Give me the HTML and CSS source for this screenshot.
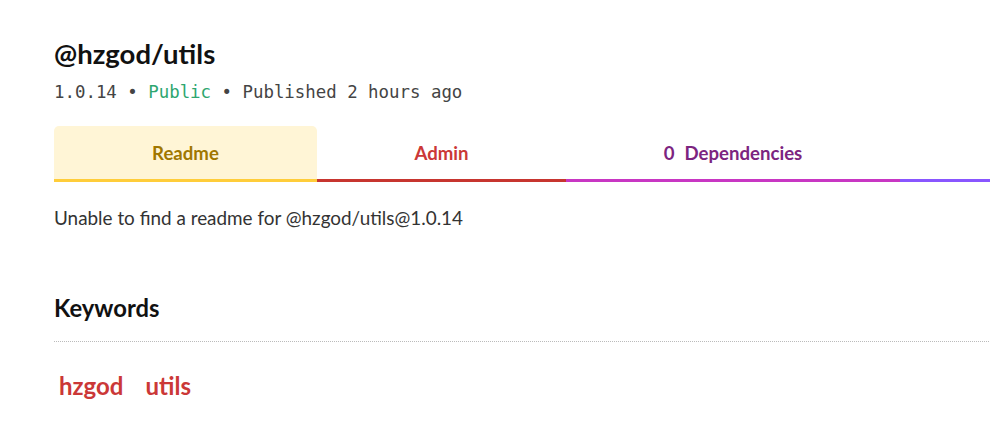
FILE: index.html
```html
<!DOCTYPE html>
<html>
<head>
<meta charset="utf-8">
<link rel="stylesheet" href="styles.css">
</head>
<body>
<main class="page">
  <header class="pkg-head">
    <h1 class="pkg-title">@hzgod/utils</h1>
    <div class="pkg-meta">1.0.14 • <span class="public">Public</span> • Published 2 hours ago</div>
  </header>
  <nav class="tabs">
    <div class="tab tab-readme">Readme</div>
    <div class="tab tab-admin">Admin</div>
    <div class="tab tab-deps"><span class="count">0</span>Dependencies</div>
    <div class="tab tab-versions"></div>
  </nav>
  <p class="readme-msg">Unable to find a readme for @hzgod/utils@1.0.14</p>
  <section class="keywords">
    <h2 class="kw-title">Keywords</h2>
    <div class="kw-list">
      <span class="kw">hzgod</span>
      <span class="kw">utils</span>
    </div>
  </section>
</main>
</body>
</html>
```

FILE: styles.css
```css
html, body {
  margin: 0;
  padding: 0;
  background: #fff;
  overflow: hidden;
}
body {
  font-family: Lato, "Noto Sans", sans-serif;
  color: rgba(0,0,0,0.8);
}
.page {
  margin-left: 54px;
  width: 936px;
  padding-top: 34px;
}
.pkg-title {
  margin: 0;
  font-size: 27.5px;
  font-weight: 700;
  color: #111;
  line-height: 40px;
}
.pkg-meta {
  margin-top: 3px;
  font-family: "DejaVu Sans Mono", "Liberation Mono", monospace;
  font-size: 17.4px;
  color: #444;
  line-height: 30px;
  letter-spacing: 0;
}
.public { color: #2ea66f; }
.tabs {
  display: flex;
  margin-top: 19px;
}
.tab {
  height: 53px;
  display: flex;
  align-items: center;
  justify-content: center;
  font-size: 18.6px;
  font-weight: 700;
  border-bottom: 3px solid;
  border-radius: 5px 5px 0 0;
  box-sizing: content-box;
}
.tab-readme {
  width: 263px;
  background: #fff5d6;
  color: #a07700;
  border-color: #ffcd3a;
}
.tab-admin {
  width: 249px;
  color: #cb3837;
  border-color: #c7352f;
  border-radius: 0;
}
.tab-deps {
  width: 334px;
  color: #7c2480;
  border-color: #c836c3;
  border-radius: 0;
}
.tab-deps .count { margin-right: 10px; }
.tab-versions {
  flex: 1;
  border-color: #8956ff;
  border-radius: 0;
}
.readme-msg {
  margin: 22px 0 0;
  font-size: 18.9px;
  line-height: 28px;
  color: #333;
}
.keywords { margin-top: 61px; }
.kw-title {
  margin: 0;
  font-size: 23.8px;
  font-weight: 700;
  color: #111;
  line-height: 30px;
  padding-bottom: 18px;
  border-bottom: 1px dotted #bbb;
  width: 935px;
}
.kw-list {
  display: flex;
  gap: 22px;
  padding: 29px 0 0 5px;
}
.kw {
  font-size: 24px;
  font-weight: 700;
  color: #cb3837;
}
```
